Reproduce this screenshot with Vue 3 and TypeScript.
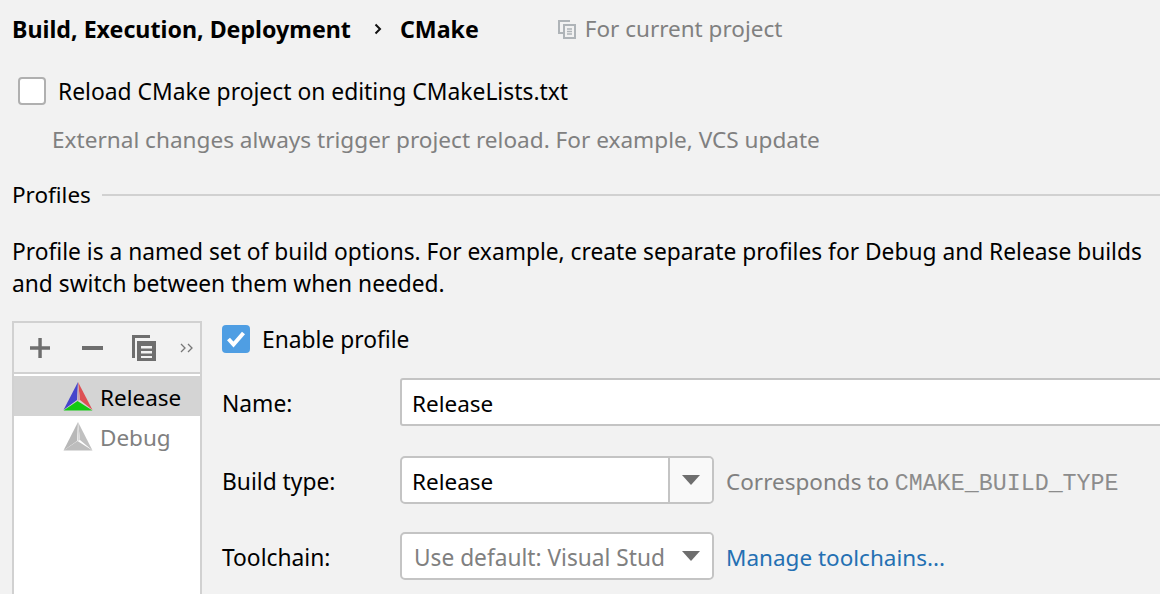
<template>
  <div class="page">
    <header class="crumbs">
      <b class="crumb-a">Build, Execution, Deployment</b>
      <svg class="chev" width="10" height="14" viewBox="0 0 10 14"><path d="M2.5 2.5 7 7l-4.500 4.500" fill="none" stroke="#111" stroke-width="2" /></svg>
      <b class="crumb-b">CMake</b>
      <span class="scope">
        <svg width="20" height="20" viewBox="0 0 20 20" fill="none" stroke="#afb4b8" stroke-width="2">
          <path d="M13 2H2v12h4" />
          <path d="M7 6h11v13H7z" />
          <path d="M10 10h5M10 12.500h5M10 15h5" stroke-width="1.500" />
        </svg>
        For current project
      </span>
    </header>

    <label class="reload"><span class="box"></span><span class="check-text">Reload CMake project on editing CMakeLists.txt</span></label>
    <p class="hint">External changes always trigger project reload. For example, VCS update</p>

    <div class="group-title"><span>Profiles</span><i></i></div>
    <p class="intro">Profile is a named set of build options. For example, create separate profiles for Debug and Release builds<br />and switch between them when needed.</p>

    <div class="profiles">
      <aside class="side">
        <div class="toolbar">
          <svg width="20" height="20" viewBox="0 0 20 20" fill="#6e6e6e"><path d="M8.500 0h3.500v8.500h8.500v3.500H12v8.500H8.500V12H0V8.500h8.500z" transform="scale(.98)" /></svg>
          <svg class="minus" width="22" height="20" viewBox="0 0 22 20" fill="#6e6e6e"><rect y="8" width="21" height="4" /></svg>
          <svg class="copy" width="26" height="28" viewBox="0 0 26 28" fill="#6e6e6e">
            <path d="M1 1h18v3H4v20H1z" />
            <path fill-rule="evenodd" d="M7 7h19v20H7zM11 12v2.500h11V12zm0 5v2.500h11V17zm0 5v2h11v-2z" transform="translate(-1 0)" />
          </svg>
          <svg class="more" width="14" height="12" viewBox="0 0 14 12" fill="none" stroke="#777" stroke-width="1.300"><path d="M1 2l4 4-4 4M8 2l4 4-4 4" /></svg>
        </div>
        <ul class="list">
          <li v-for="p in profileList" :key="p.name" :class="{ selected: p.active, off: !p.active }">
            <svg width="30" height="30" viewBox="0 0 30 30">
              <template v-if="p.active">
                <path d="M15 1 0.500 29 14 19z" fill="#4545cc" />
                <path d="M15 1 29.500 29 17 19z" fill="#dd5054" />
                <path d="M0.500 29.500 14.500 20 29.500 29.500z" fill="#12c912" />
                <path d="M15 1 17 19 14.500 20z" fill="#c9a3b0" />
              </template>
              <template v-else>
                <path d="M15 1 0.500 29.500 14 20z" fill="#b8b8b8" />
                <path d="M15 1 29.500 29.500 17 19z" fill="#c0c0c0" />
                <path d="M0.500 29.500 14.500 20 29.500 29.500z" fill="#bdbdbd" />
                <path d="M15 1 17 19 14.500 20z" fill="#d8d8d8" />
              </template>
            </svg>
            <span>{{ p.name }}</span>
          </li>
        </ul>
      </aside>

      <section class="form">
        <label class="enable">
          <span class="box on">
            <svg width="28" height="28" viewBox="0 0 28 28"><path d="M6.500 14l5 5.500L21.500 8" fill="none" stroke="#fff" stroke-width="4" /></svg>
          </span>
          <span class="check-text">Enable profile</span>
        </label>
        <div class="row name-row">
          <span class="field-label">Name:</span>
          <div class="input">Release</div>
        </div>
        <div class="row type-row">
          <span class="field-label">Build type:</span>
          <div class="combo">
            <span class="combo-text">Release</span>
            <span class="combo-arrow"><i class="tri"></i></span>
          </div>
          <span class="note">Corresponds to <code>CMAKE_BUILD_TYPE</code></span>
        </div>
        <div class="row chain-row">
          <span class="field-label">Toolchain:</span>
          <div class="combo plain">
            <span class="combo-text muted">Use default: Visual Stud</span>
            <span class="combo-arrow"><i class="tri"></i></span>
          </div>
          <a class="link">Manage toolchains...</a>
        </div>
      </section>
    </div>
  </div>
</template>

<script setup lang="ts">
interface Profile {
  name: string;
  active: boolean;
}

const profileList: Profile[] = [
  { name: 'Release', active: true },
  { name: 'Debug', active: false },
];
</script>

<style>
html, body { margin: 0; background: #f2f2f2; overflow: hidden; }
</style>

<style scoped>
.page {
  width: 1160px;
  height: 594px;
  overflow: hidden;
  box-sizing: border-box;
  padding-top: 13px;
  background: #f2f2f2;
  color: #000;
  font-family: "Noto Sans", "Open Sans", sans-serif;
  font-size: 22.5px;
  line-height: 32px;
}

.crumbs { display: flex; align-items: center; height: 32px; padding-left: 12px; }
.crumbs b { font-weight: 700; font-size: 23.2px; }
.chev { margin-left: 22px; }
.crumb-b { margin-left: 17px; }
.scope { display: flex; align-items: center; gap: 8px; margin-left: 78px; color: #808080; }

.reload { display: flex; align-items: center; height: 32px; margin-top: 30px; padding-left: 18px; font-size: 22.85px; }
.check-text { padding-top: 2px; }
.box {
  box-sizing: border-box;
  flex: none;
  width: 28px;
  height: 28px;
  margin-right: 12px;
  border: 2px solid #b0b0b0;
  border-radius: 4px;
  background: #fff;
}
.box.on { display: flex; align-items: center; justify-content: center; border: none; background: #4f9ee3; }

.hint { margin: 17px 0 0 52px; color: #808080; font-size: 22.6px; }

.group-title { display: flex; align-items: center; gap: 11px; margin-top: 23px; padding-left: 12px; }
.group-title i { flex: 1; height: 2px; background: #d1d1d1; }

.intro { margin: 25px 0 0 12px; font-size: 22.75px; }

.profiles { display: flex; margin-top: 21px; margin-left: 12px; }
.side {
  box-sizing: border-box;
  flex: none;
  width: 190px;
  height: 300px;
  border: 2px solid #d1d1d1;
  background: #fff;
}
.toolbar {
  display: flex;
  align-items: center;
  height: 49px;
  padding-left: 16px;
  background: #f2f2f2;
  border-bottom: 2px solid #d1d1d1;
}
.minus { margin-left: 32px; }
.copy { margin-left: 27px; }
.more { margin-left: 23px; }

.list { margin: 2px 0 0; padding: 0; list-style: none; }
.list li { display: flex; align-items: center; gap: 7px; height: 40px; padding-left: 49px; }
.list li span { padding-top: 4px; }
.list li.selected { background: #d4d4d4; }
.list li.off { color: #808080; }

.form { flex: 1; padding-left: 20px; min-width: 0; }
.enable { display: flex; align-items: center; height: 32px; margin-top: 2px; font-size: 22.8px; }
.row { display: flex; align-items: center; height: 48px; }
.name-row { margin-top: 23px; }
.type-row { margin-top: 30px; }
.chain-row { margin-top: 28px; }
.field-label { flex: none; width: 178px; padding-top: 4px; font-size: 22.8px; }

.input {
  box-sizing: border-box;
  flex: none;
  width: 780px;
  height: 48px;
  padding: 8px 10px;
  border: 2px solid #c4c4c4;
  border-radius: 3px;
  background: #fff;
}
.combo {
  box-sizing: border-box;
  display: flex;
  flex: none;
  width: 314px;
  height: 48px;
  border: 2px solid #c4c4c4;
  border-radius: 5px;
  background: #fff;
}
.combo-text { flex: 1; padding: 8px 0 0 10px; white-space: nowrap; overflow: hidden; }
.combo-text.muted { padding-left: 12px; color: #808080; font-size: 22.7px; }
.combo-arrow {
  display: flex;
  flex: none;
  width: 42px;
  align-items: center;
  justify-content: center;
  background: #f9f9f9;
  border-left: 2px solid #c4c4c4;
  border-radius: 0 4px 4px 0;
}
.plain .combo-arrow { background: #fff; border-left: none; }
.tri { border-left: 9px solid transparent; border-right: 9px solid transparent; border-top: 10px solid #6e6e6e; }

.note { margin-left: 12px; padding-top: 5px; color: #808080; white-space: nowrap; }
.note code { font-family: "Liberation Mono", monospace; font-size: 23.3px; color: #8c8c8c; }
.link { margin-left: 12px; padding-top: 4px; color: #2470b3; white-space: nowrap; }
</style>
